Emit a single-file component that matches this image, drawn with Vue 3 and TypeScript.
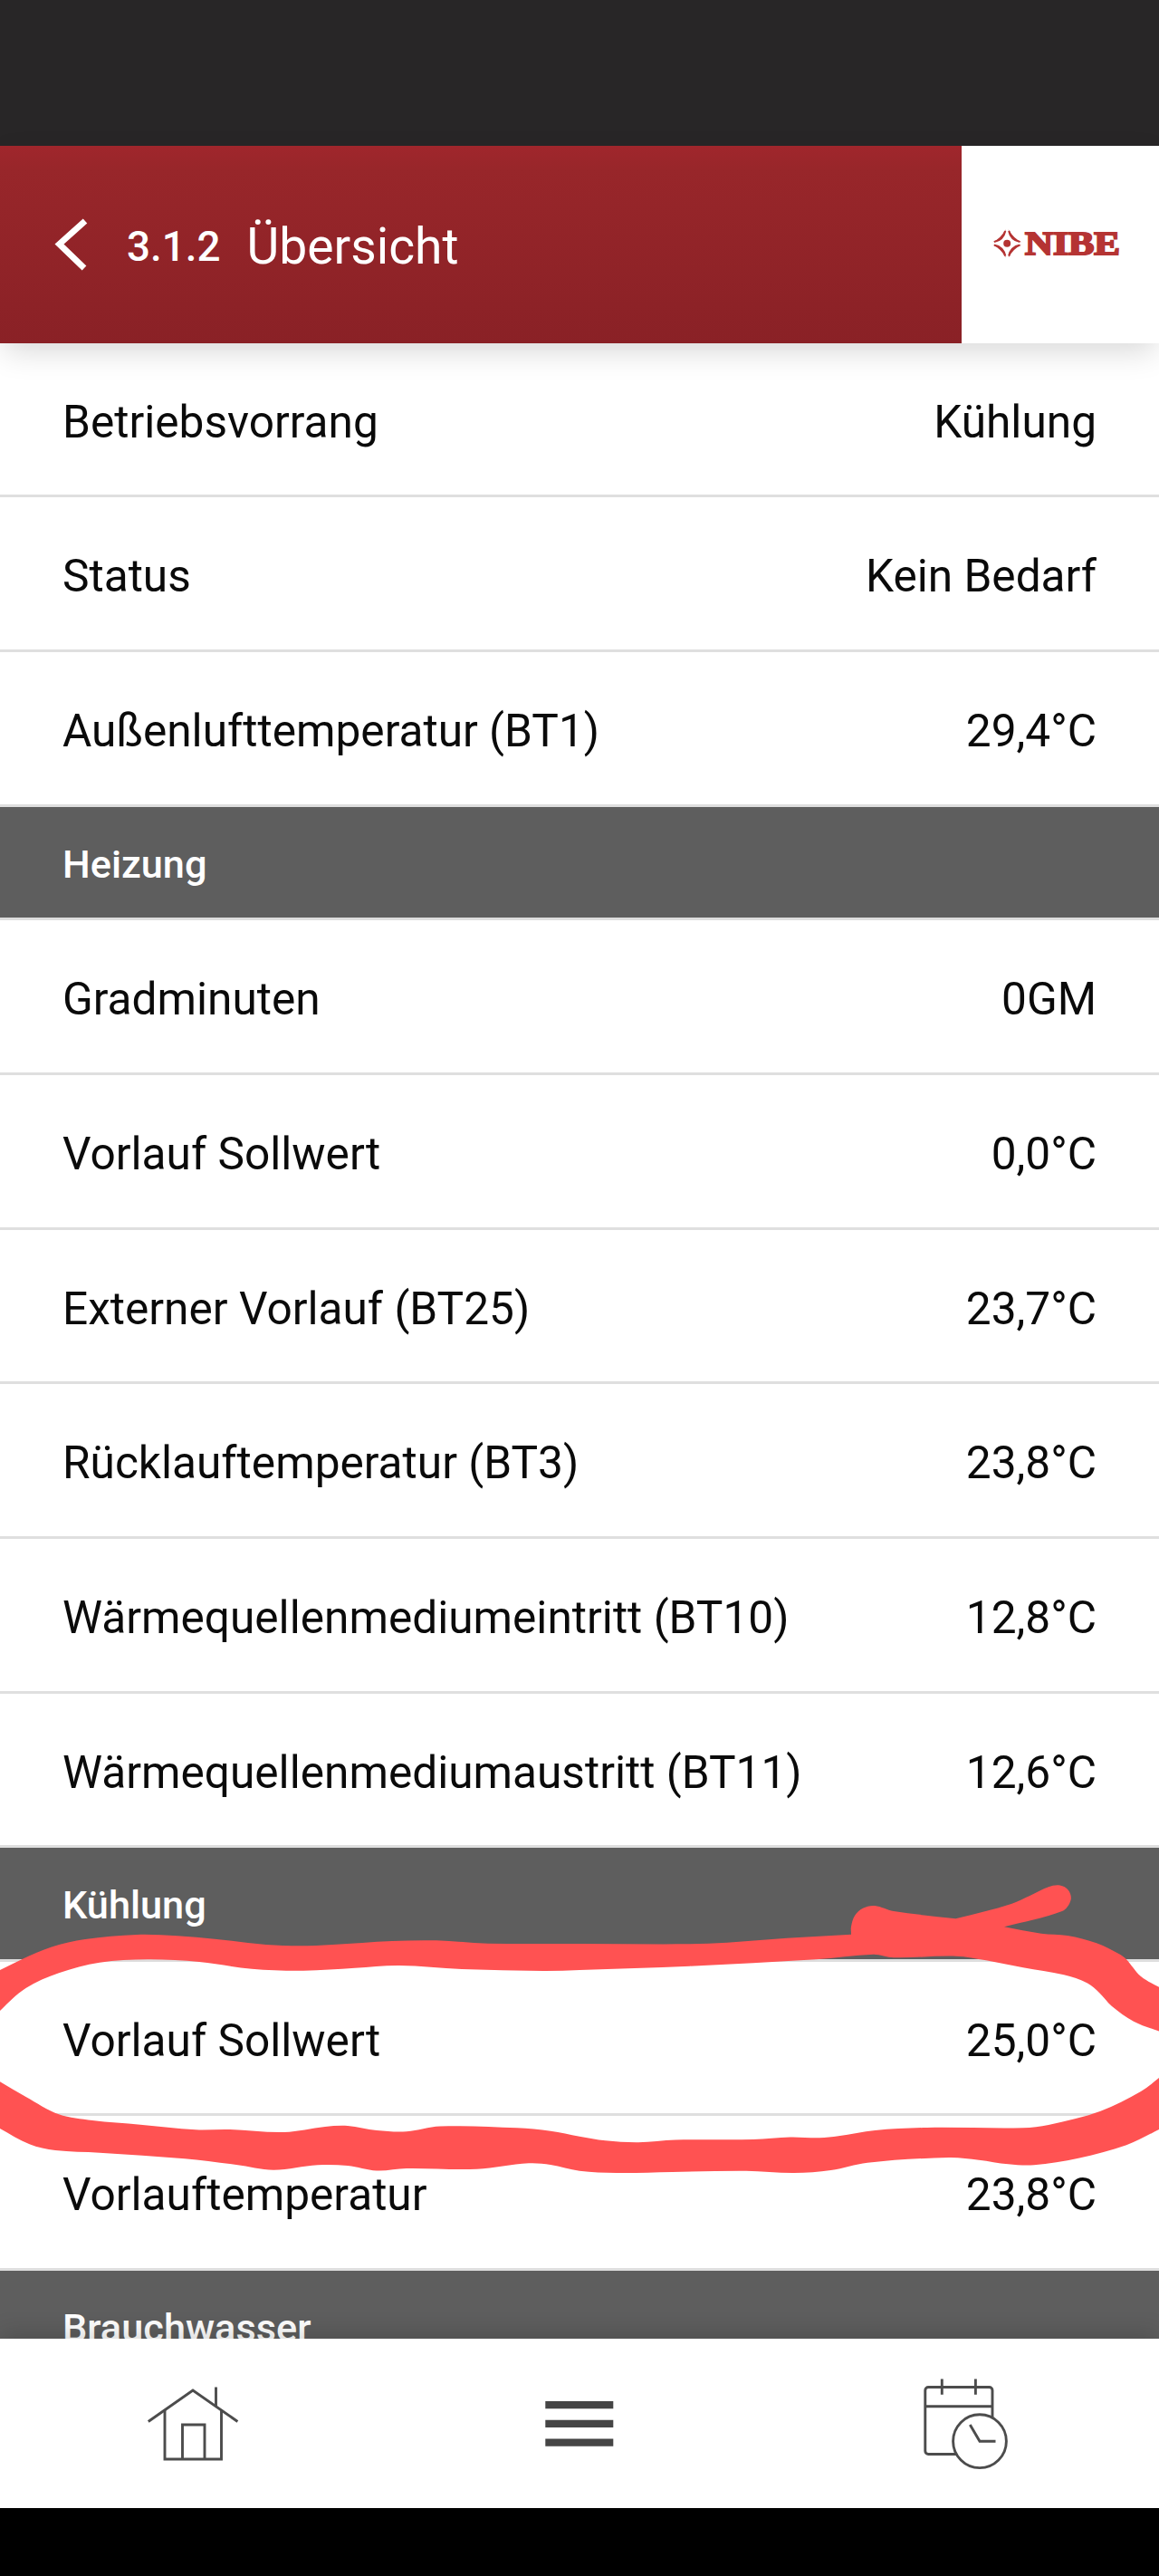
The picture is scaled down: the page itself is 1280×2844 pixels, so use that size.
<script setup lang="ts">
interface Entry {
  label: string
  value: string
}
interface Section {
  title?: string
  entries: Entry[]
}
type Point = [number, number]

const sections: Section[] = [
  {
    entries: [
      { label: 'Betriebsvorrang', value: 'Kühlung' },
      { label: 'Status', value: 'Kein Bedarf' },
      { label: 'Außenlufttemperatur (BT1)', value: '29,4°C' },
    ],
  },
  {
    title: 'Heizung',
    entries: [
      { label: 'Gradminuten', value: '0GM' },
      { label: 'Vorlauf Sollwert', value: '0,0°C' },
      { label: 'Externer Vorlauf (BT25)', value: '23,7°C' },
      { label: 'Rücklauftemperatur (BT3)', value: '23,8°C' },
      { label: 'Wärmequellenmediumeintritt (BT10)', value: '12,8°C' },
      { label: 'Wärmequellenmediumaustritt (BT11)', value: '12,6°C' },
    ],
  },
  {
    title: 'Kühlung',
    entries: [
      { label: 'Vorlauf Sollwert', value: '25,0°C' },
      { label: 'Vorlauftemperatur', value: '23,8°C' },
    ],
  },
  { title: 'Brauchwasser', entries: [] },
]

// Outlines of the hand-drawn marker loop; a repeated point makes a sharp corner.
const upperStroke: Point[] = [
  [-4, 2177], [-4, 2177], [24.5, 2163], [57, 2149.5], [94, 2141], [151, 2136], [196, 2137.3], [237, 2140.7],
  [294, 2147], [331, 2148.3], [367, 2147], [433, 2143], [482, 2142.3], [539, 2145.7], [640, 2146],
  [762, 2146.3], [803, 2144.7], [869, 2139.7], [940, 2135.7], [940, 2135.7], [940, 2127], [944, 2115],
  [953, 2106.7], [966, 2104], [987, 2110], [1055.5, 2118.3], [1055.5, 2118.3], [1117.5, 2101.7],
  [1158, 2083.3], [1170.6, 2081.5], [1180, 2087], [1182.5, 2098], [1173, 2110], [1109, 2127.3],
  [1109, 2127.3], [1150, 2134.7], [1179, 2137], [1211, 2145.3], [1236, 2157.3], [1244, 2163.3],
  [1260, 2182], [1284, 2196], [1284, 2196], [1284, 2244], [1284, 2244], [1252, 2231.7], [1228, 2215],
  [1214, 2200], [1201, 2189.5], [1175, 2180.3], [1130, 2172.3], [1089, 2164.3], [1056, 2159.7],
  [987, 2161.3], [964.5, 2157.7], [901, 2163.3], [762, 2170.7], [640, 2175], [600, 2176], [510, 2174],
  [441, 2170], [392, 2172.7], [335, 2175.7], [278, 2173.7], [220, 2166], [163, 2163.3], [110, 2166.7],
  [65, 2178.3], [28.5, 2195], [0, 2220], [-4, 2226], [-4, 2226],
]
const lowerStroke: Point[] = [
  [-4, 2296], [-4, 2296], [28.6, 2315], [65, 2334.3], [102, 2341], [155, 2345.7], [216, 2351.3],
  [253, 2351], [314, 2354], [359, 2348], [384, 2347], [416, 2352], [449, 2353.3], [486, 2347.5],
  [571, 2349.3], [608, 2352.7], [640, 2358.7], [668.6, 2363.3], [705, 2365.3], [746, 2362.5],
  [832, 2362], [872.7, 2359.5], [905, 2360.3], [926, 2358.3], [966.5, 2352], [1024, 2349],
  [1130, 2349.3], [1158, 2346], [1215.5, 2330.7], [1260, 2309], [1284, 2291], [1284, 2291],
  [1284, 2349], [1284, 2349], [1244, 2368.3], [1191, 2382.7], [1142, 2390.3], [1113.5, 2389.3],
  [1081, 2384.7], [1048, 2382], [958, 2387.7], [917.6, 2396], [877, 2399], [824, 2396.7], [742, 2398],
  [681, 2399], [640, 2396.7], [608, 2390], [584, 2388.3], [526.5, 2394.7], [449, 2394], [416, 2396.5],
  [384, 2391], [351, 2390.3], [302, 2395.7], [261, 2390], [204, 2383.3], [110, 2376.7], [61, 2374],
  [32.6, 2367.3], [0, 2350], [-4, 2347], [-4, 2347],
]

function smooth(points: Point[]): string {
  const n = points.length
  let d = `M${points[0][0]} ${points[0][1]}`
  for (let i = 0; i < n - 1; i++) {
    const p0 = points[Math.max(i - 1, 0)]
    const p1 = points[i]
    const p2 = points[i + 1]
    const p3 = points[Math.min(i + 2, n - 1)]
    const len = Math.hypot(p2[0] - p1[0], p2[1] - p1[1])
    // Limit each handle to a third of its segment so short segments do not overshoot.
    const handle = (a: Point, b: Point): Point => {
      const dx = b[0] - a[0]
      const dy = b[1] - a[1]
      const l = Math.hypot(dx, dy) || 1
      return [(dx / l) * (len / 3), (dy / l) * (len / 3)]
    }
    const h1 = handle(p0, p2)
    const h2 = handle(p1, p3)
    d += `C${p1[0] + h1[0]} ${p1[1] + h1[1]} ${p2[0] - h2[0]} ${p2[1] - h2[1]} ${p2[0]} ${p2[1]}`
  }
  return d + 'Z'
}

const markerPath = smooth(upperStroke) + smooth(lowerStroke)
</script>

<template>
  <div class="screen">
    <div class="status-bar"></div>
    <header class="header">
      <div class="title-bar">
        <svg class="back" width="44" height="64" viewBox="0 0 44 64" fill="none">
          <path d="M37 6 L8.5 31.5 L36 58" stroke="#fff" stroke-width="6.8" />
        </svg>
        <span class="number">3.1.2</span>
        <h1 class="title">Übersicht</h1>
      </div>
      <div class="brand">
        <svg width="150" height="44" viewBox="1090 247 150 44">
          <g fill="#b53433">
            <path d="M1108.6 253.3 Q1107.5 266 1094.5 267.2 Q1103.5 263 1108.6 253.3Z" />
            <path d="M1111.8 253.3 Q1113 266 1126 267.2 Q1117 263 1111.8 253.3Z" />
            <path d="M1108.6 284.2 Q1107.5 271.6 1094.5 270.4 Q1103.5 274.5 1108.6 284.2Z" />
            <path d="M1111.8 284.2 Q1113 271.6 1126 270.4 Q1117 274.5 1111.8 284.2Z" />
          </g>
          <g fill="none" stroke="#b53433" stroke-width="2.2">
            <path d="M1108.2 255 Q1106 265 1096 267" />
            <path d="M1112.2 255 Q1114.4 265 1124.4 267" />
            <path d="M1108.2 282.5 Q1106 272.5 1096 270.5" />
            <path d="M1112.2 282.5 Q1114.4 272.5 1124.4 270.5" />
          </g>
          <circle cx="1110.2" cy="268.7" r="4" fill="#b53433" />
          <text class="wordmark" x="1130" y="281" textLength="105" lengthAdjust="spacingAndGlyphs">NIBE</text>
        </svg>
      </div>
    </header>

    <main class="list">
      <section v-for="(section, i) in sections" :key="i">
        <h2 v-if="section.title" class="heading">{{ section.title }}</h2>
        <div v-for="entry in section.entries" :key="entry.label" class="row">
          <span>{{ entry.label }}</span>
          <span>{{ entry.value }}</span>
        </div>
      </section>
    </main>

    <nav class="nav">
      <div class="tab">
        <svg width="120" height="120" viewBox="153 2615.5 120 120" fill="none" stroke="#4c4c4c" stroke-width="2.9">
          <path d="M163.8 2673 L213 2638.5 L262.4 2673" />
          <path d="M238.5 2635 V2656" />
          <path d="M182 2660 V2714.5 H244.5 V2660" />
          <path d="M201.5 2714.5 V2676.5 H226 V2714.5" />
        </svg>
      </div>
      <div class="tab">
        <svg width="120" height="120" viewBox="580 2615.5 120 120" fill="#454545">
          <path d="M602.3 2650.5h75v8.3h-75zM602.3 2671.3h75v8.3h-75zM602.3 2692h75v8.3h-75z" />
        </svg>
      </div>
      <div class="tab">
        <svg width="120" height="120" viewBox="1007 2615.5 120 120" fill="none" stroke="#4c4c4c" stroke-width="2.9">
          <rect x="1021.8" y="2635" width="74.2" height="74" rx="3.5" />
          <path d="M1040.3 2626 V2643.3 M1077.4 2626 V2643.3 M1022 2656.2 H1096" />
          <circle cx="1082" cy="2694.7" r="29.4" fill="#fff" />
          <path d="M1071.3 2676.5 L1082 2694.7 H1099.5" />
        </svg>
      </div>
    </nav>
    <div class="gesture-bar"></div>

    <svg class="marker" width="1280" height="2844" viewBox="0 0 1280 2844">
      <path :d="markerPath" fill="#ff5252" />
    </svg>
  </div>
</template>

<style>
body {
  margin: 0;
}
</style>

<style scoped>
.screen {
  position: relative;
  display: flex;
  flex-direction: column;
  width: 1280px;
  height: 2844px;
  overflow: hidden;
  background: #fff;
  font-family: Roboto, "Liberation Sans", sans-serif;
  color: #0a0a0a;
}
.status-bar {
  flex: none;
  height: 161px;
  background: #282627;
}
.header {
  flex: none;
  display: flex;
  height: 217.8px;
  z-index: 1;
  box-shadow: 0 12px 32px -4px rgba(0, 0, 0, 0.16);
}
.title-bar {
  display: flex;
  align-items: baseline;
  box-sizing: border-box;
  width: 1062px;
  padding: 77px 0 0 57px;
  background: linear-gradient(#a0262c, #98262a 12%, #8a2126);
  color: #fff;
}
.back {
  align-self: flex-start;
}
.number {
  margin-left: 39px;
  font-size: 45.8px;
  font-weight: 500;
  line-height: 60px;
  position: relative;
  top: -3px;
}
.title {
  margin: 0 0 0 29px;
  font-size: 55.2px;
  font-weight: 400;
  line-height: 68px;
}
.brand {
  flex: 1;
  display: flex;
  justify-content: center;
  padding: 85.5px 8px 0 0;
  background: #fff;
}
.wordmark {
  font: bold 36.5px "Liberation Serif", serif;
  fill: #b53433;
  stroke: #b53433;
  stroke-width: 2px;
}
.list {
  flex: 1;
  min-height: 0;
  overflow: hidden;
}
.row {
  display: flex;
  justify-content: space-between;
  box-sizing: border-box;
  height: 170.7px;
  padding: 4px 69px 0;
  border-bottom: 3px solid #dfdfdf;
  font-size: 49.6px;
  line-height: 167px;
  white-space: nowrap;
}
.heading {
  box-sizing: border-box;
  height: 125.3px;
  margin: 0;
  padding: 3px 69px 0;
  border-bottom: 3px solid #dedede;
  background: #5e5e5e;
  background-clip: padding-box;
  color: #fff;
  font-size: 43.3px;
  font-weight: 500;
  line-height: 122px;
}
.nav {
  flex: none;
  display: flex;
  height: 187px;
  background: #fff;
  z-index: 1;
  box-shadow: 0 -6px 24px rgba(0, 0, 0, 0.16);
}
.tab {
  flex: 1;
  display: flex;
  align-items: center;
  justify-content: center;
}
.gesture-bar {
  flex: none;
  height: 75px;
  background: #000;
  z-index: 1;
}
.marker {
  position: absolute;
  inset: 0;
}
</style>
